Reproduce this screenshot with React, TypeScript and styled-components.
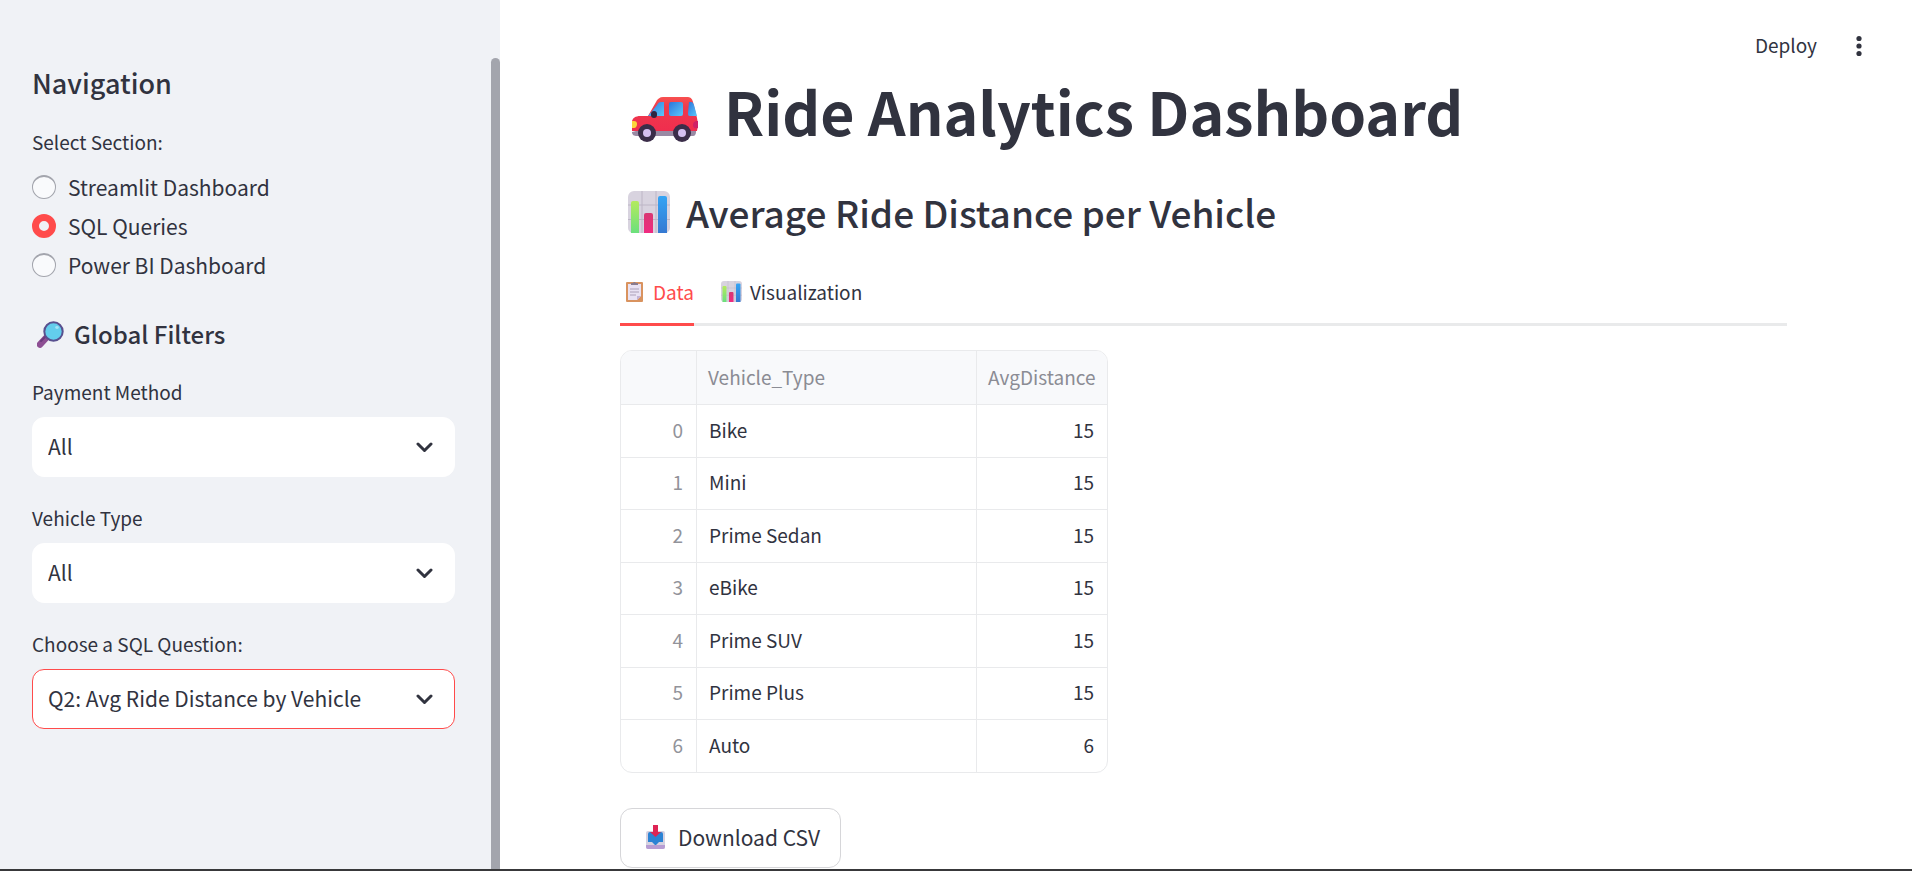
import React, { useState } from "react";
import styled, { createGlobalStyle } from "styled-components";

const ink = "#31333f";
const red = "#ff4b4b";
const line = "#e9eaec";

const GlobalStyle = createGlobalStyle`
  *, *::before, *::after { box-sizing: border-box; }
  body {
    margin: 0;
    background: #ffffff;
    color: ${ink};
    font-family: "Source Sans Pro", "Noto Sans CJK SC", "Noto Sans", sans-serif;
    font-size: 21px;
  }
  button, select, input { font-family: inherit; color: inherit; }
  svg { display: block; flex: none; }
`;

const Page = styled.div`
  display: grid;
  grid-template-columns: 500px minmax(0, 1fr);
  min-height: 100vh;
  border-bottom: 2px solid #38383a;
`;

const Sidebar = styled.aside`
  display: flex;
  padding-top: 58px;
  background: #f0f2f6;
`;

const SidebarContent = styled.div`
  flex: 1;
  padding: 6px 36px 24px 32px;
`;

const ScrollThumb = styled.div`
  width: 9px;
  border-radius: 5px 5px 0 0;
  background: #a3a5ad;
`;

const SidebarTitle = styled.h2`
  display: flex;
  align-items: center;
  gap: 10px;
  margin: 0;
  font-size: 27px;
  line-height: 38px;
  font-weight: 500;
`;

const SidebarSubtitle = styled(SidebarTitle).attrs({ as: "h3" })`
  margin: 31px 0 22px;
  padding-left: 5px;
  font-size: 24px;
`;

const RadioGroup = styled.fieldset`
  margin: 23px 0 0;
  padding: 0;
  border: 0;
`;

const Caption = styled.legend`
  padding: 0;
  font-size: 19px;
  line-height: 34px;
`;

const RadioRow = styled.label`
  display: flex;
  align-items: center;
  gap: 12px;
  height: 39px;

  &:first-of-type { margin-top: 8px; }
`;

const Radio = styled.input`
  appearance: none;
  width: 24px;
  height: 24px;
  margin: 0;
  border: 1px solid #a3a5ad;
  border-top-width: 2px;
  border-radius: 50%;
  background: #f9fafc;

  &:checked {
    border: 7px solid ${red};
    background: #f0f2f6;
  }
`;

const Field = styled.div`
  display: flex;
  flex-direction: column;
  gap: 8px;
  & + & { margin-top: 24px; }
`;

const FieldLabel = styled.label`
  font-size: 19px;
  line-height: 34px;
`;

const SelectBox = styled.div<{ $active?: boolean }>`
  display: grid;
  grid-template-columns: minmax(0, 1fr) 54px;
  align-items: center;
  height: 60px;
  border: 1px solid ${(p) => (p.$active ? red : "#ffffff")};
  border-radius: 12px;
  background: #ffffff;

  svg { grid-area: 1 / 2; pointer-events: none; margin-left: 16px; }
`;

const Select = styled.select`
  grid-area: 1 / 1 / 2 / 3;
  appearance: none;
  width: 100%;
  height: 58px;
  padding: 0 54px 2px 15px;
  border: 0;
  outline: 0;
  background: transparent;
  font-size: 21px;
`;

const Main = styled.main`
  display: flex;
  flex-direction: column;
`;

const Toolbar = styled.header`
  display: flex;
  justify-content: flex-end;
  align-items: center;
  gap: 32px;
  height: 72px;
  padding: 20px 43px 0 0;
`;

const PlainButton = styled.button`
  padding: 0 0 2px;
  border: 0;
  background: none;
  font-size: 19px;
  line-height: 30px;
`;

const Content = styled.div`
  padding: 0 125px 0 120px;
`;

const Title = styled.h1`
  display: flex;
  align-items: center;
  gap: 26px;
  margin: 0;
  padding-left: 12px;
  font-size: 59px;
  line-height: 78px;
  font-weight: 700;
`;

const Subtitle = styled.h2`
  display: flex;
  align-items: center;
  gap: 16px;
  margin: 36px 0 0;
  padding-left: 8px;
  font-size: 37px;
  line-height: 52px;
  font-weight: 500;
`;

const TabList = styled.div`
  display: flex;
  gap: 27px;
  margin-top: 28px;
  box-shadow: inset 0 -3px 0 #e9eaeb;
`;

const Tab = styled.button<{ $active: boolean }>`
  display: flex;
  align-items: center;
  gap: 8px;
  height: 60px;
  padding: 0 0 6px;
  border: 0;
  border-bottom: 3px solid ${(p) => (p.$active ? red : "transparent")};
  background: none;
  color: ${(p) => (p.$active ? red : ink)};
  font-size: 19px;
`;

const TableFrame = styled.div`
  width: 488px;
  margin-top: 24px;
  border: 1px solid ${line};
  border-radius: 12px;
  overflow: hidden;
`;

const Table = styled.table`
  width: 100%;
  table-layout: fixed;
  border-collapse: separate;
  border-spacing: 0;
  font-size: 19px;

  tbody tr:nth-child(even) > * { height: 52px; }
  tr > * + * { border-left: 1px solid ${line}; }
  tbody tr > * { border-top: 1px solid ${line}; }
`;

const HeadCell = styled.th<{ $width?: number; $right?: boolean }>`
  width: ${(p) => (p.$width ? `${p.$width}px` : "auto")};
  height: 53px;
  padding: 0 12px 2px 11px;
  background: #f8f9fb;
  color: #8b8c94;
  font-weight: 400;
  text-align: ${(p) => (p.$right ? "right" : "left")};
`;

const IndexCell = styled.th`
  height: 53px;
  padding: 0 13px 4px;
  color: #92939a;
  font-weight: 400;
  text-align: right;
`;

const Cell = styled.td<{ $right?: boolean }>`
  height: 53px;
  padding: 0 13px 4px 12px;
  text-align: ${(p) => (p.$right ? "right" : "left")};
`;

const DownloadButton = styled.button`
  display: flex;
  align-items: center;
  gap: 12px;
  height: 60px;
  margin-top: 35px;
  padding: 0 20px 2px 25px;
  border: 1px solid #d6d6d9;
  border-radius: 12px;
  background: #ffffff;
  font-size: 21px;
`;

const CarIcon = () => (
  <svg width="66" height="64" viewBox="0 -18 66 64" aria-hidden="true">
    <defs>
      <linearGradient id="glass" x1="0" y1="0" x2="1" y2="1">
        <stop offset="0" stopColor="#2b76dc" />
        <stop offset="1" stopColor="#5cc8fa" />
      </linearGradient>
      <linearGradient id="body" x1="0" y1="0" x2="0" y2="1">
        <stop offset="0" stopColor="#f8504f" />
        <stop offset="0.3" stopColor="#ee3a4d" />
        <stop offset="1" stopColor="#f02d4e" />
      </linearGradient>
    </defs>
    <path d="M4 34h60v1c0 2-1 4-3 4H5c-3 0-5-1-5-4z" fill="#998aa4" />
    <path d="M31 0h24c3 0 5 1 6 5l4 16c1 4 1 9 0 13H0V25c0-4 4-6 8-6h8l8-14c1-3 4-5 7-5z" fill="url(#body)" />
    <path d="M25 8c1-2 2-3 4-3h3v14H16z" fill="url(#glass)" />
    <rect x="37" y="5" width="14" height="14" rx="2" fill="url(#glass)" />
    <path d="M57 5h2c2 0 2 1 3 3l3 11h-7c-2 0-2-1-2-3z" fill="url(#glass)" />
    <rect x="19" y="14" width="6" height="7" rx="3" fill="#2f2440" />
    <path d="M0 24h2c2 0 3 1 3 3s-1 4-3 4H0z" fill="#fbd63c" />
    <path d="M66 24c-4 0-5 2-5 4s1 4 5 3z" fill="#cf2267" />
    <circle cx="15" cy="36" r="9" fill="#3b2d49" />
    <circle cx="50" cy="36" r="9" fill="#3b2d49" />
    <circle cx="15" cy="36" r="4" fill="#d5bff1" />
    <circle cx="50" cy="36" r="4" fill="#d5bff1" />
  </svg>
);

const ChartIcon = ({ size }: { size: number }) => (
  <svg width={size} height={size} viewBox="0 0 42 42" aria-hidden="true">
    <defs>
      <linearGradient id="barGreen" x1="0" y1="0" x2="0" y2="1">
        <stop offset="0" stopColor="#b4ea5e" />
        <stop offset="1" stopColor="#6be07d" />
      </linearGradient>
      <linearGradient id="barPink" x1="0" y1="0" x2="0" y2="1">
        <stop offset="0" stopColor="#d83872" />
        <stop offset="1" stopColor="#f02a80" />
      </linearGradient>
      <linearGradient id="barBlue" x1="0" y1="0" x2="0" y2="1">
        <stop offset="0" stopColor="#35a4f4" />
        <stop offset="1" stopColor="#3579d2" />
      </linearGradient>
    </defs>
    <path d="M6 0h30a6 6 0 0 1 6 6v30a6 6 0 0 1-4 6H4a6 6 0 0 1-4-6V6a6 6 0 0 1 6-6z" fill="#d8d3df" />
    <path d="M14 0v42M28 0v42M0 14h42M0 28.500h42" stroke="#bdb6c6" strokeWidth="1" />
    <path d="M3 42V12q0-2 2-2h4q2 0 2 2v30z" fill="url(#barGreen)" />
    <path d="M16 42V24q0-2 2-2h5q2 0 2 2v18z" fill="url(#barPink)" />
    <path d="M30 42V7q0-2 2-2h5q2 0 2 2v35z" fill="url(#barBlue)" />
  </svg>
);

const ClipboardIcon = () => (
  <svg width="25" height="21" viewBox="0 0 25 21" aria-hidden="true">
    <rect x="6" y="1" width="17" height="20" rx="1" fill="#d9935f" />
    <path d="M8 3h13v12l-4 4H8z" fill="#e9e2f3" />
    <path d="M17 19v-4h4z" fill="#c3b4d8" />
    <path d="M11 4V2h2q1-2 3 0h2v2z" fill="#8a7c8f" />
    <path d="M10 8h9M10 11h9M10 14h6" stroke="#aca0b8" strokeWidth="1" />
  </svg>
);

const MagnifierIcon = () => (
  <svg width="27" height="27" viewBox="0 0 27 27" aria-hidden="true">
    <path d="M9 17L3 23.500" stroke="#8d4f93" strokeWidth="6.500" strokeLinecap="round" />
    <path d="M8 16l-4 4" stroke="#6b3b7c" strokeWidth="2" strokeLinecap="round" />
    <circle cx="16.500" cy="10.500" r="9.200" fill="#63cdec" stroke="#58508f" strokeWidth="2" />
    <ellipse cx="20" cy="6.500" rx="1.800" ry="1.400" fill="#a4e4f6" />
  </svg>
);

const InboxIcon = () => (
  <svg width="20" height="24" viewBox="0 0 20 24" aria-hidden="true">
    <rect x="0" y="6" width="19" height="18" rx="2" fill="#d5d1e0" />
    <path d="M0 20h19v2q0 2-2 2H2q-2 0-2-2z" fill="#b79dd3" />
    <path d="M4 7h11q2 0 2 2v8h-4l-3 3h-1l-3-3H2V9q0-2 2-2z" fill="#2b83d4" />
    <path d="M7 0h5v7h3l-5.500 5L4 7h3z" fill="#de2454" />
  </svg>
);

const Chevron = () => (
  <svg width="17" height="14" viewBox="0 -2 17 14" aria-hidden="true">
    <path d="M2 2l6.500 6.500L15 2" fill="none" stroke={ink} strokeWidth="3" strokeLinecap="round" strokeLinejoin="round" />
  </svg>
);

const DotsIcon = () => (
  <svg width="20" height="24" viewBox="0 0 20 24" aria-hidden="true">
    <circle cx="10" cy="5.500" r="2.600" fill={ink} />
    <circle cx="10" cy="13" r="2.600" fill={ink} />
    <circle cx="10" cy="20.500" r="2.600" fill={ink} />
  </svg>
);

const sections = ["Streamlit Dashboard", "SQL Queries", "Power BI Dashboard"];

const filters = [
  { id: "payment", label: "Payment Method", value: "All" },
  { id: "vehicle", label: "Vehicle Type", value: "All" },
  { id: "question", label: "Choose a SQL Question:", value: "Q2: Avg Ride Distance by Vehicle", active: true },
];

const rows: [string, number][] = [
  ["Bike", 15],
  ["Mini", 15],
  ["Prime Sedan", 15],
  ["eBike", 15],
  ["Prime SUV", 15],
  ["Prime Plus", 15],
  ["Auto", 6],
];

export default function App() {
  const [section, setSection] = useState("SQL Queries");
  const [tab, setTab] = useState("Data");

  return (
    <>
      <GlobalStyle />
      <Page>
        <Sidebar>
          <SidebarContent>
            <SidebarTitle>Navigation</SidebarTitle>
            <RadioGroup>
              <Caption>Select Section:</Caption>
              {sections.map((name) => (
                <RadioRow key={name}>
                  <Radio
                    type="radio"
                    name="section"
                    checked={section === name}
                    onChange={() => setSection(name)}
                  />
                  {name}
                </RadioRow>
              ))}
            </RadioGroup>
            <SidebarSubtitle>
              <MagnifierIcon />
              Global Filters
            </SidebarSubtitle>
            {filters.map((f) => (
              <Field key={f.id}>
                <FieldLabel htmlFor={f.id}>{f.label}</FieldLabel>
                <SelectBox $active={f.active}>
                  <Select id={f.id} defaultValue={f.value}>
                    <option>{f.value}</option>
                  </Select>
                  <Chevron />
                </SelectBox>
              </Field>
            ))}
          </SidebarContent>
          <ScrollThumb />
        </Sidebar>
        <Main>
          <Toolbar>
            <PlainButton type="button">Deploy</PlainButton>
            <PlainButton type="button" aria-label="Menu">
              <DotsIcon />
            </PlainButton>
          </Toolbar>
          <Content>
            <Title>
              <CarIcon />
              Ride Analytics Dashboard
            </Title>
            <Subtitle>
              <ChartIcon size={42} />
              Average Ride Distance per Vehicle
            </Subtitle>
            <TabList role="tablist">
              <Tab type="button" role="tab" aria-selected={tab === "Data"} $active={tab === "Data"} onClick={() => setTab("Data")}>
                <ClipboardIcon />
                Data
              </Tab>
              <Tab
                type="button"
                role="tab"
                aria-selected={tab === "Visualization"}
                $active={tab === "Visualization"}
                onClick={() => setTab("Visualization")}
              >
                <ChartIcon size={21} />
                Visualization
              </Tab>
            </TabList>
            <TableFrame>
              <Table>
                <thead>
                  <tr>
                    <HeadCell $width={75} />
                    <HeadCell>Vehicle_Type</HeadCell>
                    <HeadCell $width={131} $right>AvgDistance</HeadCell>
                  </tr>
                </thead>
                <tbody>
                  {rows.map(([name, distance], i) => (
                    <tr key={name}>
                      <IndexCell scope="row">{i}</IndexCell>
                      <Cell>{name}</Cell>
                      <Cell $right>{distance}</Cell>
                    </tr>
                  ))}
                </tbody>
              </Table>
            </TableFrame>
            <DownloadButton type="button">
              <InboxIcon />
              Download CSV
            </DownloadButton>
          </Content>
        </Main>
      </Page>
    </>
  );
}
